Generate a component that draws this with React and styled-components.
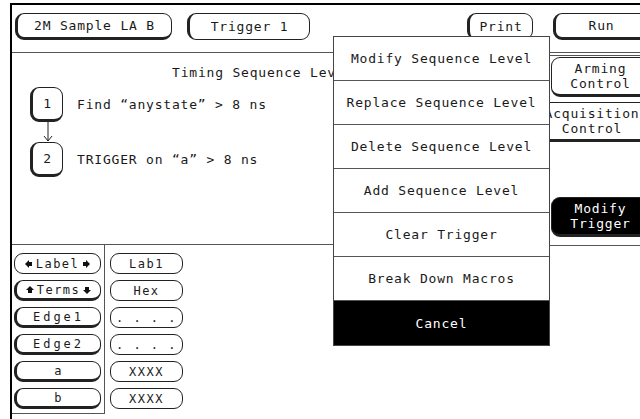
import React from 'react'
import styled, { createGlobalStyle } from 'styled-components'

const Global = createGlobalStyle`
  html, body {
    margin: 0;
    padding: 0;
    background: #fff;
  }
  body {
    font-family: "DejaVu Sans Mono", "Liberation Mono", monospace;
    font-size: 13px;
    letter-spacing: 0.8px;
    color: #1a1a1a;
    overflow: hidden;
  }
`

const Screen = styled.div`
  position: relative;
  box-sizing: border-box;
  margin: 3px 0 0 10px;
  width: 640px;
  height: 416px;
  border-top: 2px solid #000;
  border-left: 2px solid #000;
  display: flex;
  flex-direction: column;
  overflow: hidden;
`

const Header = styled.div`
  box-sizing: border-box;
  height: 48px;
  display: flex;
  align-items: flex-start;
  padding: 8px 0 0 3px;
  border-bottom: 1px solid #555;
`

const Key = styled.div`
  box-sizing: border-box;
  flex-shrink: 0;
  display: flex;
  align-items: center;
  justify-content: center;
  width: ${p => p.$w}px;
  height: 27px;
  margin-left: ${p => p.$ml || 0}px;
  border: 1px solid #222;
  border-left-width: ${p => (p.$left ? 3 : 1)}px;
  border-bottom-width: ${p => (p.$bottom ? 3 : 1)}px;
  border-radius: 9px;
  background: #fff;
  white-space: nowrap;
`

const Body = styled.div`
  flex: 1;
  display: flex;
`

const Main = styled.div`
  width: 538px;
  flex-shrink: 0;
  display: flex;
  flex-direction: column;
`

const SeqArea = styled.div`
  box-sizing: border-box;
  height: 192px;
  border-bottom: 1px solid #555;
  padding: 12px 0 0 18px;
`

const Title = styled.div`
  padding-left: 142px;
  height: 22px;
`

const SeqRow = styled.div`
  display: flex;
  align-items: center;
  gap: 14px;
`

const LevelBox = styled.div`
  box-sizing: border-box;
  width: 33px;
  height: 35px;
  display: flex;
  align-items: center;
  justify-content: center;
  border: 1px solid #222;
  border-left-width: 3px;
  border-bottom-width: 3px;
  border-radius: 9px;
`

const Arrow = styled.svg`
  display: block;
  margin-left: 12px;
`

const Lower = styled.div`
  display: flex;
  align-items: flex-start;
`

const LabelPanel = styled.div`
  box-sizing: border-box;
  width: 93px;
  height: 169px;
  border-right: 1px solid #555;
  border-bottom: 1px solid #555;
  padding: 8px 0 0 2px;
  display: flex;
  flex-direction: column;
  gap: 6px;
`

const ValuePanel = styled.div`
  padding: 8px 0 0 5px;
  display: flex;
  flex-direction: column;
  gap: 6px;
`

const Cell = styled.div`
  box-sizing: border-box;
  display: flex;
  align-items: center;
  justify-content: center;
  gap: 3px;
  width: ${p => p.$w}px;
  height: 21px;
  border: 1px solid #222;
  border-left-width: ${p => (p.$heavy ? 3 : 1)}px;
  border-bottom-width: ${p => (p.$heavy ? 3 : 1)}px;
  border-radius: 9px;
  font-size: 12px;
  letter-spacing: ${p => p.$ls || 1.5}px;
  line-height: 1;
`

const Side = styled.div`
  flex: 1;
  display: flex;
  flex-direction: column;
  padding-top: 2px;
`

const SideRule = styled.div`
  height: 1px;
  background: #555;
  margin: ${p => p.$mt || 0}px 0 1px;
`

const SideKey = styled.div`
  box-sizing: border-box;
  height: 40px;
  margin: ${p => p.$mt || 0}px -10px 0 ${p => p.$ml ?? 1}px;
  display: flex;
  flex-direction: column;
  align-items: center;
  justify-content: center;
  line-height: 15px;
  white-space: nowrap;
  border: 1px solid #222;
  border-bottom-width: 3px;
  border-radius: 9px 0 0 9px;
  background: ${p => (p.$active ? '#000' : '#fff')};
  color: ${p => (p.$active ? '#fff' : '#1a1a1a')};
  padding-right: 10px;
`

const Menu = styled.div`
  position: absolute;
  left: 321px;
  top: 31px;
  width: 217px;
  box-sizing: border-box;
  border: 1px solid #444;
  background: #fff;
`

const MenuItem = styled.div`
  display: flex;
  align-items: center;
  justify-content: center;
  border-bottom: ${p => (p.$last ? 'none' : '1px solid #555')};
  background: ${p => (p.$active ? '#000' : '#fff')};
  color: ${p => (p.$active ? '#fff' : '#1a1a1a')};
  height: ${p => (p.$last ? 44 : 43)}px;
`

const Tri = ({ dir }) => {
  const paths = {
    left: 'M0 4 L4 0 L4 2 L7 2 L7 6 L4 6 L4 8 Z',
    right: 'M8 4 L4 0 L4 2 L1 2 L1 6 L4 6 L4 8 Z',
    up: 'M4 0 L8 4 L6 4 L6 7 L2 7 L2 4 L0 4 Z',
    down: 'M4 8 L8 4 L6 4 L6 1 L2 1 L2 4 L0 4 Z'
  }
  return (
    <svg width="8" height="8" viewBox="0 0 8 8">
      <path d={paths[dir]} fill="#111" />
    </svg>
  )
}

const menu = [
  'Modify Sequence Level',
  'Replace Sequence Level',
  'Delete Sequence Level',
  'Add Sequence Level',
  'Clear Trigger',
  'Break Down Macros',
  'Cancel'
]

const labels = [
  { text: 'Edge1', ls: 3 },
  { text: 'Edge2', ls: 3 },
  { text: 'a' },
  { text: 'b' }
]
const values = ['. . . .', '. . . .', 'XXXX', 'XXXX']

export default function App() {
  return (
    <>
      <Global />
      <Screen>
        <Header>
          <Key $w={157} $left $bottom>2M Sample LA B</Key>
          <Key $w={123} $ml={15} $left>Trigger 1</Key>
          <Key $w={66} $ml={157} $left>Print</Key>
          <Key $w={95} $ml={20} $left $bottom>Run</Key>
        </Header>
        <Body>
          <Main>
            <SeqArea>
              <Title>Timing Sequence Levels</Title>
              <SeqRow>
                <LevelBox>1</LevelBox>
                <span>Find “anystate” &gt; 8 ns</span>
              </SeqRow>
              <Arrow width="12" height="20" viewBox="0 0 12 20">
                <path d="M6 0 V19 M2 14 L6 19 L10 14" stroke="#222" fill="none" />
              </Arrow>
              <SeqRow>
                <LevelBox>2</LevelBox>
                <span>TRIGGER on “a” &gt; 8 ns</span>
              </SeqRow>
            </SeqArea>
            <Lower>
              <LabelPanel>
                <Cell $w={87}>
                  <Tri dir="left" />Label<Tri dir="right" />
                </Cell>
                <Cell $w={87} $heavy>
                  <Tri dir="up" />Terms<Tri dir="down" />
                </Cell>
                {labels.map(l => (
                  <Cell key={l.text} $w={87} $ls={l.ls} $heavy>{l.text}</Cell>
                ))}
              </LabelPanel>
              <ValuePanel>
                <Cell $w={73}>Lab1</Cell>
                <Cell $w={73}>Hex</Cell>
                {values.map((v, i) => (
                  <Cell key={i} $w={73}>{v}</Cell>
                ))}
              </ValuePanel>
            </Lower>
          </Main>
          <Side>
            <SideRule />
            <SideKey>
              <span>Arming</span>
              <span>Control</span>
            </SideKey>
            <SideKey $mt={5} $ml={-16}>
              <span>Acquisition</span>
              <span>Control</span>
            </SideKey>
            <SideKey $mt={55} $active>
              <span>Modify</span>
              <span>Trigger</span>
            </SideKey>
            <SideRule $mt={8} />
          </Side>
        </Body>
        <Menu>
          {menu.map((m, i) => (
            <MenuItem key={m} $active={i === menu.length - 1} $last={i === menu.length - 1}>
              {m}
            </MenuItem>
          ))}
        </Menu>
      </Screen>
    </>
  )
}
